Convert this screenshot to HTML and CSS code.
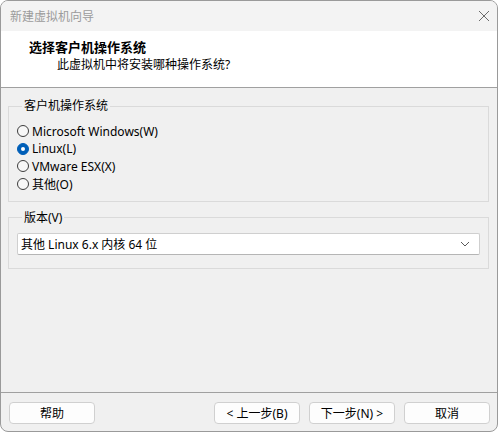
FILE: index.html
```html
<!DOCTYPE html>
<html lang="zh-CN">
<head>
<meta charset="utf-8">
<title>新建虚拟机向导</title>
<link rel="stylesheet" href="styles.css">
</head>
<body>
<div class="window">
  <div class="titlebar">
    <span class="title">新建虚拟机向导</span>
    <svg class="close" width="12" height="12" viewBox="0 0 12 12"><path d="M1 1L11 11M11 1L1 11" stroke="#6b6b6b" stroke-width="1" fill="none"/></svg>
  </div>
  <div class="header">
    <div class="h-title">选择客户机操作系统</div>
    <div class="h-sub">此虚拟机中将安装哪种操作系统?</div>
  </div>
  <div class="content">
    <fieldset class="group g1">
      <legend>客户机操作系统</legend>
      <div class="radio"><span class="dot"></span><span>Microsoft Windows(W)</span></div>
      <div class="radio"><span class="dot checked"></span><span>Linux(L)</span></div>
      <div class="radio"><span class="dot"></span><span>VMware ESX(X)</span></div>
      <div class="radio"><span class="dot"></span><span>其他(O)</span></div>
    </fieldset>
    <fieldset class="group g2">
      <legend>版本(V)</legend>
      <div class="select">
        <span>其他 Linux 6.x 内核 64 位</span>
        <svg class="chev" width="10" height="6" viewBox="0 0 10 6"><path d="M1 1L5 5L9 1" stroke="#5a5a5a" stroke-width="1" fill="none"/></svg>
      </div>
    </fieldset>
  </div>
  <div class="footer">
    <button class="btn">帮助</button>
    <div class="spacer"></div>
    <button class="btn">&lt; 上一步(B)</button>
    <button class="btn">下一步(N) &gt;</button>
    <button class="btn">取消</button>
  </div>
</div>
</body>
</html>
```
FILE: styles.css
```css
html, body {
  margin: 0;
  padding: 0;
  background: #ffffff;
}
body {
  font-family: "Noto Sans", "Noto Sans CJK SC", sans-serif;
  font-size: 12px;
  color: #1a1a1a;
}
.window {
  width: 498px;
  height: 432px;
  box-sizing: border-box;
  border: 1px solid #9a9a9a;
  border-radius: 8px;
  background: #f0f0f0;
  display: flex;
  flex-direction: column;
  overflow: hidden;
}
.titlebar {
  height: 30px;
  flex: none;
  background: #f3f3f3;
  display: flex;
  align-items: center;
  padding: 0 7px 0 9px;
}
.title {
  color: #9b9b9b;
  flex: 1;
}
.header {
  flex: none;
  background: #ffffff;
  border-bottom: 1px solid #a0a0a0;
  padding: 7px 0 0 28px;
  box-sizing: border-box;
  height: 57px;
}
.h-title {
  font-size: 13px;
  font-weight: bold;
  color: #000;
  line-height: 18px;
}
.h-sub {
  padding-left: 28px;
  line-height: 17px;
  color: #000;
}
.content {
  flex: 1;
  padding: 0 8px 0 7px;
}
.group {
  margin: 0;
  border: 1px solid #dadada;
  padding: 0 8px;
  min-width: 0;
}
.group legend {
  padding: 0 2px;
  margin-left: 5px;
  line-height: 16px;
  color: #000;
}
.g1 {
  margin-top: 10px;
  padding-top: 8.5px;
  padding-bottom: 8px;
}
.radio {
  height: 17.6px;
  display: flex;
  align-items: center;
  color: #000;
}
.dot {
  width: 12px;
  height: 12px;
  border: 1px solid #3c3c3c;
  border-radius: 50%;
  box-sizing: border-box;
  background: #f7f7f7;
  margin-right: 3.5px;
  margin-left: -0.5px;
  flex: none;
  position: relative;
}
.dot.checked {
  background: #005fb8;
  border-color: #005fb8;
}
.dot.checked::after {
  content: "";
  position: absolute;
  left: 3px;
  top: 3px;
  width: 4px;
  height: 4px;
  border-radius: 50%;
  background: #fff;
}
.g2 {
  margin-top: 8px;
  padding-top: 7px;
  padding-bottom: 13px;
}
.select {
  height: 22px;
  box-sizing: border-box;
  background: #fff;
  border: 1px solid #cfcfcf;
  border-bottom-color: #b5b5b5;
  border-radius: 2px;
  display: flex;
  align-items: center;
  padding: 0 9px 0 3px;
  color: #000;
}
.select span {
  flex: 1;
}
.footer {
  flex: none;
  border-top: 1px solid #a0a0a0;
  padding: 9px 7px 7px 8px;
  display: flex;
  gap: 9px;
}
.spacer {
  flex: 1;
}
.btn {
  width: 86px;
  height: 22px;
  box-sizing: border-box;
  background: #fdfdfd;
  border: 1px solid #d0d0d0;
  border-radius: 4px;
  font-family: inherit;
  font-size: 12px;
  color: #000;
  padding: 0;
}
```
